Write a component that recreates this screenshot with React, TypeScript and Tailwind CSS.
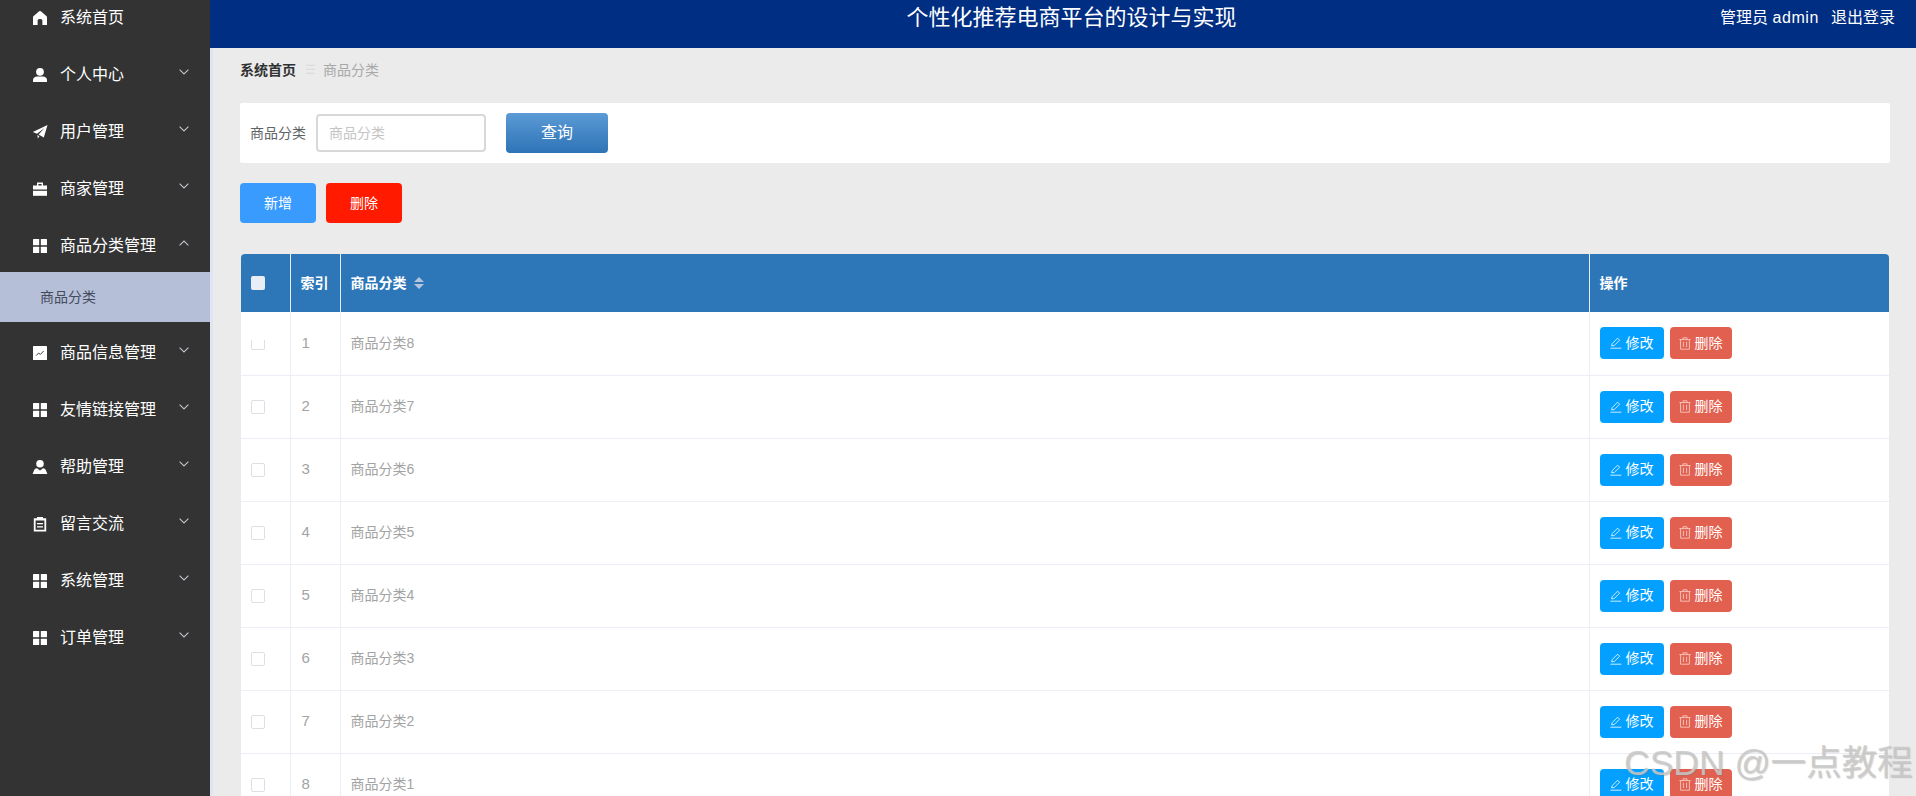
import React from "react";

function Icon({ name }: { name: string }) {
  const cls = "w-[16px] h-[16px] shrink-0 fill-white";
  switch (name) {
    case "home":
      return (
        <svg viewBox="0 0 16 16" className={cls}>
          <path d="M8 1 C7.4 1 7 1.3 6.5 1.7 L1.4 6.3 C1 6.7 1 7 1 7.6 V15 H5.6 V10.6 C5.6 9.6 6.6 9 8 9 C9.4 9 10.4 9.6 10.4 10.6 V15 H15 V7.6 C15 7 15 6.7 14.6 6.3 L9.5 1.7 C9 1.3 8.6 1 8 1 Z" />
        </svg>
      );
    case "user":
      return (
        <svg viewBox="0 0 16 16" className={cls}>
          <ellipse cx="8" cy="4.8" rx="3.9" ry="3.9" />
          <path d="M1 15 V13 C1 10.8 3 9.6 5 9.6 H11 C13 9.6 15 10.8 15 13 V15 Z" />
        </svg>
      );
    case "plane":
      return (
        <svg viewBox="0 0 16 16" className={cls}>
          <path d="M15.5 1 L0.8 8 L5 9.8 L12.5 4 L6.6 10.6 L11.8 13.6 Z" />
          <path d="M5.4 11 L7.4 12.2 L5.8 14.6 Z" />
        </svg>
      );
    case "case":
      return (
        <svg viewBox="0 0 16 16" className={cls}>
          <path fillRule="evenodd" d="M5 1.5 H11 V4.6 H15 V8.6 H1 V4.6 H5 Z M6.4 3 V4.6 H9.6 V3 Z" />
          <rect x="1" y="9.8" width="14" height="5" />
        </svg>
      );
    case "grid":
      return (
        <svg viewBox="0 0 16 16" className={cls}>
          <rect x="1" y="1" width="6.2" height="6.2" rx="0.5" />
          <rect x="8.8" y="1" width="6.2" height="6.2" rx="0.5" />
          <rect x="1" y="8.8" width="6.2" height="6.2" rx="0.5" />
          <rect x="8.8" y="8.8" width="6.2" height="6.2" rx="0.5" />
        </svg>
      );
    case "chart":
      return (
        <svg viewBox="0 0 16 16" className={cls}>
          <rect x="1" y="1" width="14" height="14" rx="0.6" />
          <path d="M4.2 10.6 L6.6 8 L8.4 9.4 L11.6 6" fill="none" stroke="#444" strokeWidth="1" />
        </svg>
      );
    case "custom":
      return (
        <svg viewBox="0 0 16 16" className={cls}>
          <circle cx="8" cy="4.8" r="3.8" />
          <path d="M0.6 15 L2.2 11 C2.6 10 3.6 9.4 5 9.2 L8 11.4 L11 9.2 C12.4 9.4 13.4 10 13.8 11 L15.4 15 Z" />
        </svg>
      );
    default:
      return (
        <svg viewBox="0 0 16 16" className={cls}>
          <path fillRule="evenodd" d="M1.8 2.2 H5 V1 H11 V2.2 H14.2 V15.4 H1.8 Z M3.6 4.4 V13.8 H12.4 V4.4 Z" />
          <rect x="5" y="7" width="6" height="1.3" />
          <rect x="5" y="10.2" width="6" height="1.3" />
        </svg>
      );
  }
}

function Chevron({ up }: { up?: boolean }) {
  return (
    <svg viewBox="0 0 10 6" className="w-[10px] h-[6px] fill-none stroke-[#c0c4cc] stroke-[1.1]">
      <path d={up ? "M0.6 5.4 L5 1 L9.4 5.4" : "M0.6 0.6 L5 5 L9.4 0.6"} />
    </svg>
  );
}

function MenuItem({ icon, label, arrow, open }: { icon: string; label: string; arrow?: boolean; open?: boolean }) {
  return (
    <div className="h-[57px] flex items-center pl-[32px] pr-[21px] text-white text-[16px]">
      <Icon name={icon} />
      <span className="ml-[12px] flex-1">{label}</span>
      {arrow && (
        <span className="-mt-[6px]">
          <Chevron up={open} />
        </span>
      )}
    </div>
  );
}

function PencilIcon() {
  return (
    <svg viewBox="0 0 12 12" className="w-[12px] h-[12px] fill-none stroke-white stroke-[0.8]">
      <path d="M1.6 8.8 L2.2 6.6 L7.6 1.2 L9.6 3.2 L4.2 8.6 Z" />
      <path d="M0.4 11.2 H11.4" />
    </svg>
  );
}

function TrashIcon() {
  return (
    <svg viewBox="0 0 12 13" className="w-[12px] h-[13px] fill-none stroke-[#f9d5cf] stroke-[0.8]">
      <path d="M0.4 2.6 H11.6 M4 2.6 V0.8 H8 V2.6 M1.6 2.6 V12.2 H10.4 V2.6 M4.4 4.8 V10 M7.6 4.8 V10" />
    </svg>
  );
}

const rows = [
  ["1", "商品分类8"],
  ["2", "商品分类7"],
  ["3", "商品分类6"],
  ["4", "商品分类5"],
  ["5", "商品分类4"],
  ["6", "商品分类3"],
  ["7", "商品分类2"],
  ["8", "商品分类1"],
];

export default function App() {
  return (
    <div
      className="relative w-[1916px] h-[796px] overflow-hidden flex bg-[#ebebeb]"
      style={{ fontFamily: '"Liberation Sans", "Noto Sans CJK SC", sans-serif' }}
    >
      <aside className="w-[210px] shrink-0 bg-[#333333]">
        <div className="-mt-[11px]">
          <MenuItem icon="home" label="系统首页" />
          <MenuItem icon="user" label="个人中心" arrow />
          <MenuItem icon="plane" label="用户管理" arrow />
          <MenuItem icon="case" label="商家管理" arrow />
          <MenuItem icon="grid" label="商品分类管理" arrow open />
          <div className="h-[50px] -mt-[2px] bg-[#b5bfd8] flex items-center pl-[40px] text-[14px] text-[#444c5c]">
            商品分类
          </div>
          <div className="mt-[2px]">
            <MenuItem icon="chart" label="商品信息管理" arrow />
            <MenuItem icon="grid" label="友情链接管理" arrow />
            <MenuItem icon="custom" label="帮助管理" arrow />
            <MenuItem icon="order" label="留言交流" arrow />
            <MenuItem icon="grid" label="系统管理" arrow />
            <MenuItem icon="grid" label="订单管理" arrow />
          </div>
        </div>
      </aside>

      <main className="flex-1 min-w-0 flex flex-col">
        <header className="h-[48px] shrink-0 bg-[#002e83] text-white flex items-start pr-[21px]">
          <div className="flex-1 pl-[213px] text-center text-[22px] leading-[35px]">个性化推荐电商平台的设计与实现</div>
          <div className="text-[16px] leading-[35px] whitespace-nowrap">
            管理员 <span className="tracking-[0.6px]">admin</span>
            <span className="ml-[12px]">退出登录</span>
          </div>
        </header>

        <div className="flex-1 border-l-[3px] border-[#dfe5f3] pl-[27px] pr-[26px]">
          <div className="h-[44px] mb-[11px] flex items-center text-[14px]">
            <span className="font-bold text-[#303133]">系统首页</span>
            <span className="ml-[9px] mr-[7px] text-[#dcdcdc] text-[12px]">☰</span>
            <span className="text-[#a8a8a8]">商品分类</span>
          </div>

          <div className="h-[60px] bg-white flex items-center pl-[10px] rounded-[2px]">
            <span className="text-[14px] text-[#606266]">商品分类</span>
            <div className="ml-[10px] w-[170px] h-[38px] border-2 border-[#d8d8d8] rounded-[4px] bg-white flex items-center pl-[11px] text-[14px] text-[#c4c4c4]">
              商品分类
            </div>
            <button className="ml-[20px] w-[102px] h-[40px] rounded-[4px] bg-gradient-to-b from-[#5b9ad5] to-[#2d74b6] text-white text-[16px]">
              查询
            </button>
          </div>

          <div className="mt-[20px] flex gap-[10px]">
            <button className="w-[76px] h-[40px] rounded-[4px] bg-[#3a9bff] text-white text-[14px]">新增</button>
            <button className="w-[76px] h-[40px] rounded-[4px] bg-[#ff1a00] text-white text-[14px]">删除</button>
          </div>

          <div className="mt-[31px] mx-[1px]">
            <table className="w-full table-fixed border-collapse text-[14px]">
              <colgroup>
                <col className="w-[49px]" />
                <col className="w-[50px]" />
                <col />
                <col className="w-[300px]" />
              </colgroup>
              <thead>
                <tr className="h-[58px] bg-[#2d77b9] text-white font-bold text-left">
                  <th className="pl-[10px] rounded-tl-[4px] border-r border-[#e6eef6]">
                    <span className="block w-[14px] h-[14px] rounded-[2px] bg-[#e9eef6]" />
                  </th>
                  <th className="pl-[10px] border-r border-[#e6eef6]">索引</th>
                  <th className="pl-[10px] border-r border-[#e6eef6]">
                    <span className="inline-flex items-center">
                      商品分类
                      <svg viewBox="0 0 10 12" className="ml-[7px] w-[10px] h-[12px] fill-[#b4c4dc]">
                        <path d="M5 0 L10 5 H0 Z M5 12 L0 7 H10 Z" />
                      </svg>
                    </span>
                  </th>
                  <th className="pl-[10px] rounded-tr-[4px]">操作</th>
                </tr>
              </thead>
              <tbody>
                {rows.map(([idx, name], i) => (
                  <tr key={idx} className="h-[63px] bg-white text-[#a3a3a3] border-b border-[#ebeef5]">
                    <td className="pl-[10px] border-r border-[#ebeef5]">
                      {i === 0 ? (
                        <span className="block w-[14px] h-[10px] mt-[4px] rounded-b-[2px] border border-t-0 border-[#dcdfe6] bg-white" />
                      ) : (
                        <span className="block w-[14px] h-[14px] rounded-[2px] border border-[#dcdfe6] bg-white" />
                      )}
                    </td>
                    <td className="pl-[11px] text-[15px] border-r border-[#ebeef5]">{idx}</td>
                    <td className="pl-[10px] border-r border-[#ebeef5]">{name}</td>
                    <td className="pl-[10px]">
                      <div className="flex gap-[6px]">
                        <button className="w-[64px] h-[32px] rounded-[4px] bg-[#03a0ff] text-white text-[14px] flex items-center justify-center gap-[4px]">
                          <PencilIcon />
                          修改
                        </button>
                        <button className="w-[62px] h-[32px] rounded-[4px] bg-[#e2604f] text-white text-[14px] flex items-center justify-center gap-[4px]">
                          <TrashIcon />
                          删除
                        </button>
                      </div>
                    </td>
                  </tr>
                ))}
              </tbody>
            </table>
          </div>
        </div>
      </main>

      <div className="absolute left-[1624px] top-[741px] text-[35.5px] leading-[44px] whitespace-nowrap text-[#c9c9c9]/85 [text-shadow:1px_1px_1px_rgba(120,120,120,0.35)]">
        CSDN @一点教程
      </div>
    </div>
  );
}
